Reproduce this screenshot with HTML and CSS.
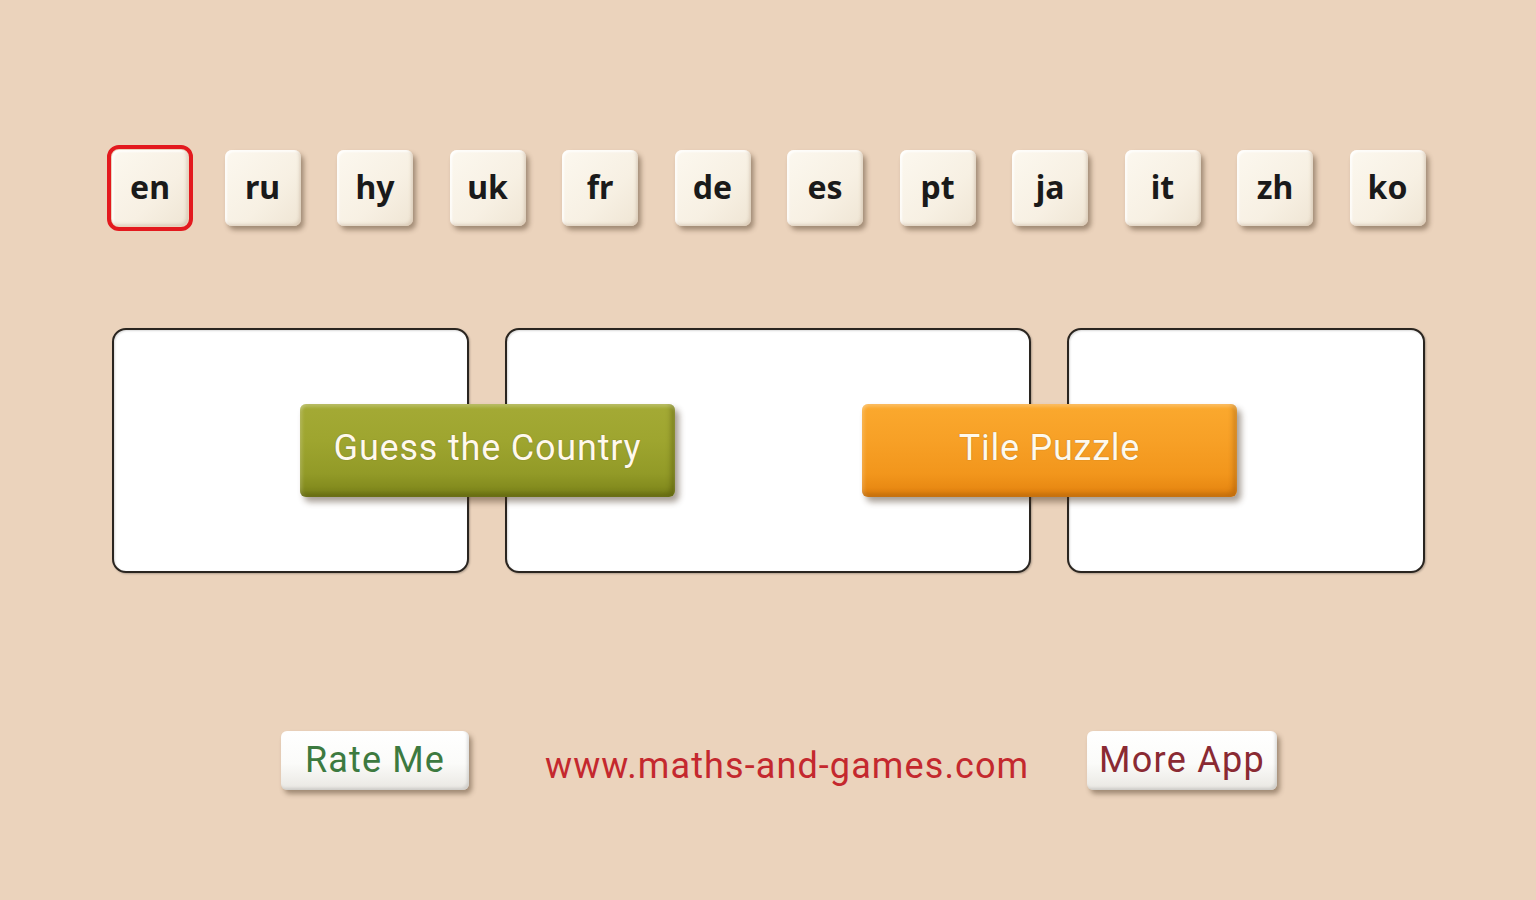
FILE: index.html
```html
<!DOCTYPE html>
<html>
<head>
<meta charset="utf-8">
<link rel="stylesheet" href="styles.css">
</head>
<body>
<div class="page">
  <div class="langs">
    <div class="tile selected">en</div>
    <div class="tile">ru</div>
    <div class="tile">hy</div>
    <div class="tile">uk</div>
    <div class="tile">fr</div>
    <div class="tile">de</div>
    <div class="tile">es</div>
    <div class="tile">pt</div>
    <div class="tile">ja</div>
    <div class="tile">it</div>
    <div class="tile">zh</div>
    <div class="tile">ko</div>
  </div>
  <div class="games">
    <div class="box box1"></div>
    <div class="box box2"></div>
    <div class="box box3"></div>
    <div class="btn green">Guess the Country</div>
    <div class="btn orange">Tile Puzzle</div>
  </div>
  <div class="footer">
    <div class="small rate">Rate Me</div>
    <div class="url">www.maths-and-games.com</div>
    <div class="small more">More App</div>
  </div>
</div>
</body>
</html>
```
FILE: styles.css
```css
html, body {
  margin: 0;
  padding: 0;
  background: #ebd3bc;
  width: 1536px;
  height: 900px;
  overflow: hidden;
}
.page {
  display: flex;
  flex-direction: column;
  padding-top: 150px;
}
.langs {
  display: flex;
  gap: 36.5px;
  padding-left: 112px;
}
.tile {
  width: 76px;
  height: 76px;
  border-radius: 7px;
  background: linear-gradient(135deg, #fcf8ef 0%, #f7f0e3 60%, #efe5d4 100%);
  box-shadow: 3px 4px 5px rgba(70, 50, 30, 0.45), inset -2px -2px 3px rgba(150, 120, 90, 0.22), inset 2px 2px 2px rgba(255, 255, 255, 0.8);
  display: flex;
  align-items: center;
  justify-content: center;
  font-family: "Noto Sans", "DejaVu Sans", sans-serif;
  font-weight: 700;
  font-size: 32px;
  color: #1a1a1a;
  line-height: 1;
  padding-bottom: 2px;
  box-sizing: border-box;
}
.tile.selected {
  outline: 4px solid #e3191e;
  outline-offset: 1px;
  box-shadow: inset -2px -2px 3px rgba(150, 120, 90, 0.22), inset 2px 2px 2px rgba(255, 255, 255, 0.8);
}
.games {
  position: relative;
  display: flex;
  gap: 36px;
  margin-left: 112px;
  margin-top: 102px;
}
.box {
  height: 245px;
  box-sizing: border-box;
  background: #fff;
  border: 2px solid #2a2520;
  border-radius: 14px;
  box-shadow: 1px 1px 2px rgba(0, 0, 0, 0.25), inset 1px 1px 2px rgba(0, 0, 0, 0.15);
}
.box1 { width: 357px; }
.box2 { width: 526px; }
.box3 { width: 358px; }
.btn {
  position: absolute;
  top: 76px;
  width: 375px;
  height: 93px;
  border-radius: 6px;
  display: flex;
  align-items: center;
  justify-content: center;
  font-family: Roboto, "Liberation Sans", sans-serif;
  font-size: 36px;
  color: #fff9ec;
  text-shadow: 0 0 1px rgba(60, 40, 0, 0.5);
  padding-bottom: 6px;
  box-sizing: border-box;
}
.green {
  left: 188px;
  letter-spacing: 0.8px;
  background: linear-gradient(180deg, #a4aa35 0%, #9ea52f 40%, #929a27 75%, #7a8218 100%);
  box-shadow: 4px 5px 6px rgba(60, 40, 20, 0.45), inset 0 3px 3px rgba(255, 255, 255, 0.2), inset -4px -4px 5px rgba(60, 60, 0, 0.35), inset 3px 0 3px rgba(255, 255, 255, 0.12);
}
.orange {
  left: 750px;
  letter-spacing: 0.75px;
  background: linear-gradient(180deg, #fba92e 0%, #f7a026 40%, #f2961c 75%, #e3820e 100%);
  box-shadow: 4px 5px 6px rgba(60, 40, 20, 0.45), inset 0 3px 3px rgba(255, 255, 255, 0.2), inset -4px -4px 5px rgba(120, 60, 0, 0.3), inset 3px 0 3px rgba(255, 255, 255, 0.12);
}
.footer {
  display: flex;
  align-items: center;
  padding-left: 281px;
  margin-top: 158px;
}
.small {
  width: 188px;
  height: 59px;
  border-radius: 6px;
  background: linear-gradient(180deg, #ffffff 0%, #fbfbf9 55%, #e9e7e2 100%);
  box-shadow: 3px 4px 5px rgba(70, 50, 30, 0.45), inset -2px -2px 3px rgba(0, 0, 0, 0.12);
  display: flex;
  align-items: center;
  justify-content: center;
  font-family: Roboto, "Liberation Sans", sans-serif;
  font-size: 36px;
  padding-bottom: 2px;
  box-sizing: border-box;
}
.rate { color: #3d7a40; letter-spacing: 1.15px; }
.more { color: #8a2a33; width: 190px; letter-spacing: 1.25px; }
.url {
  margin-left: 76px;
  margin-right: 59px;
  width: 483px;
  font-family: Roboto, "Liberation Sans", sans-serif;
  font-size: 36px;
  letter-spacing: 1.1px;
  color: #c4282e;
  padding-top: 10px;
  white-space: nowrap;
}
```
